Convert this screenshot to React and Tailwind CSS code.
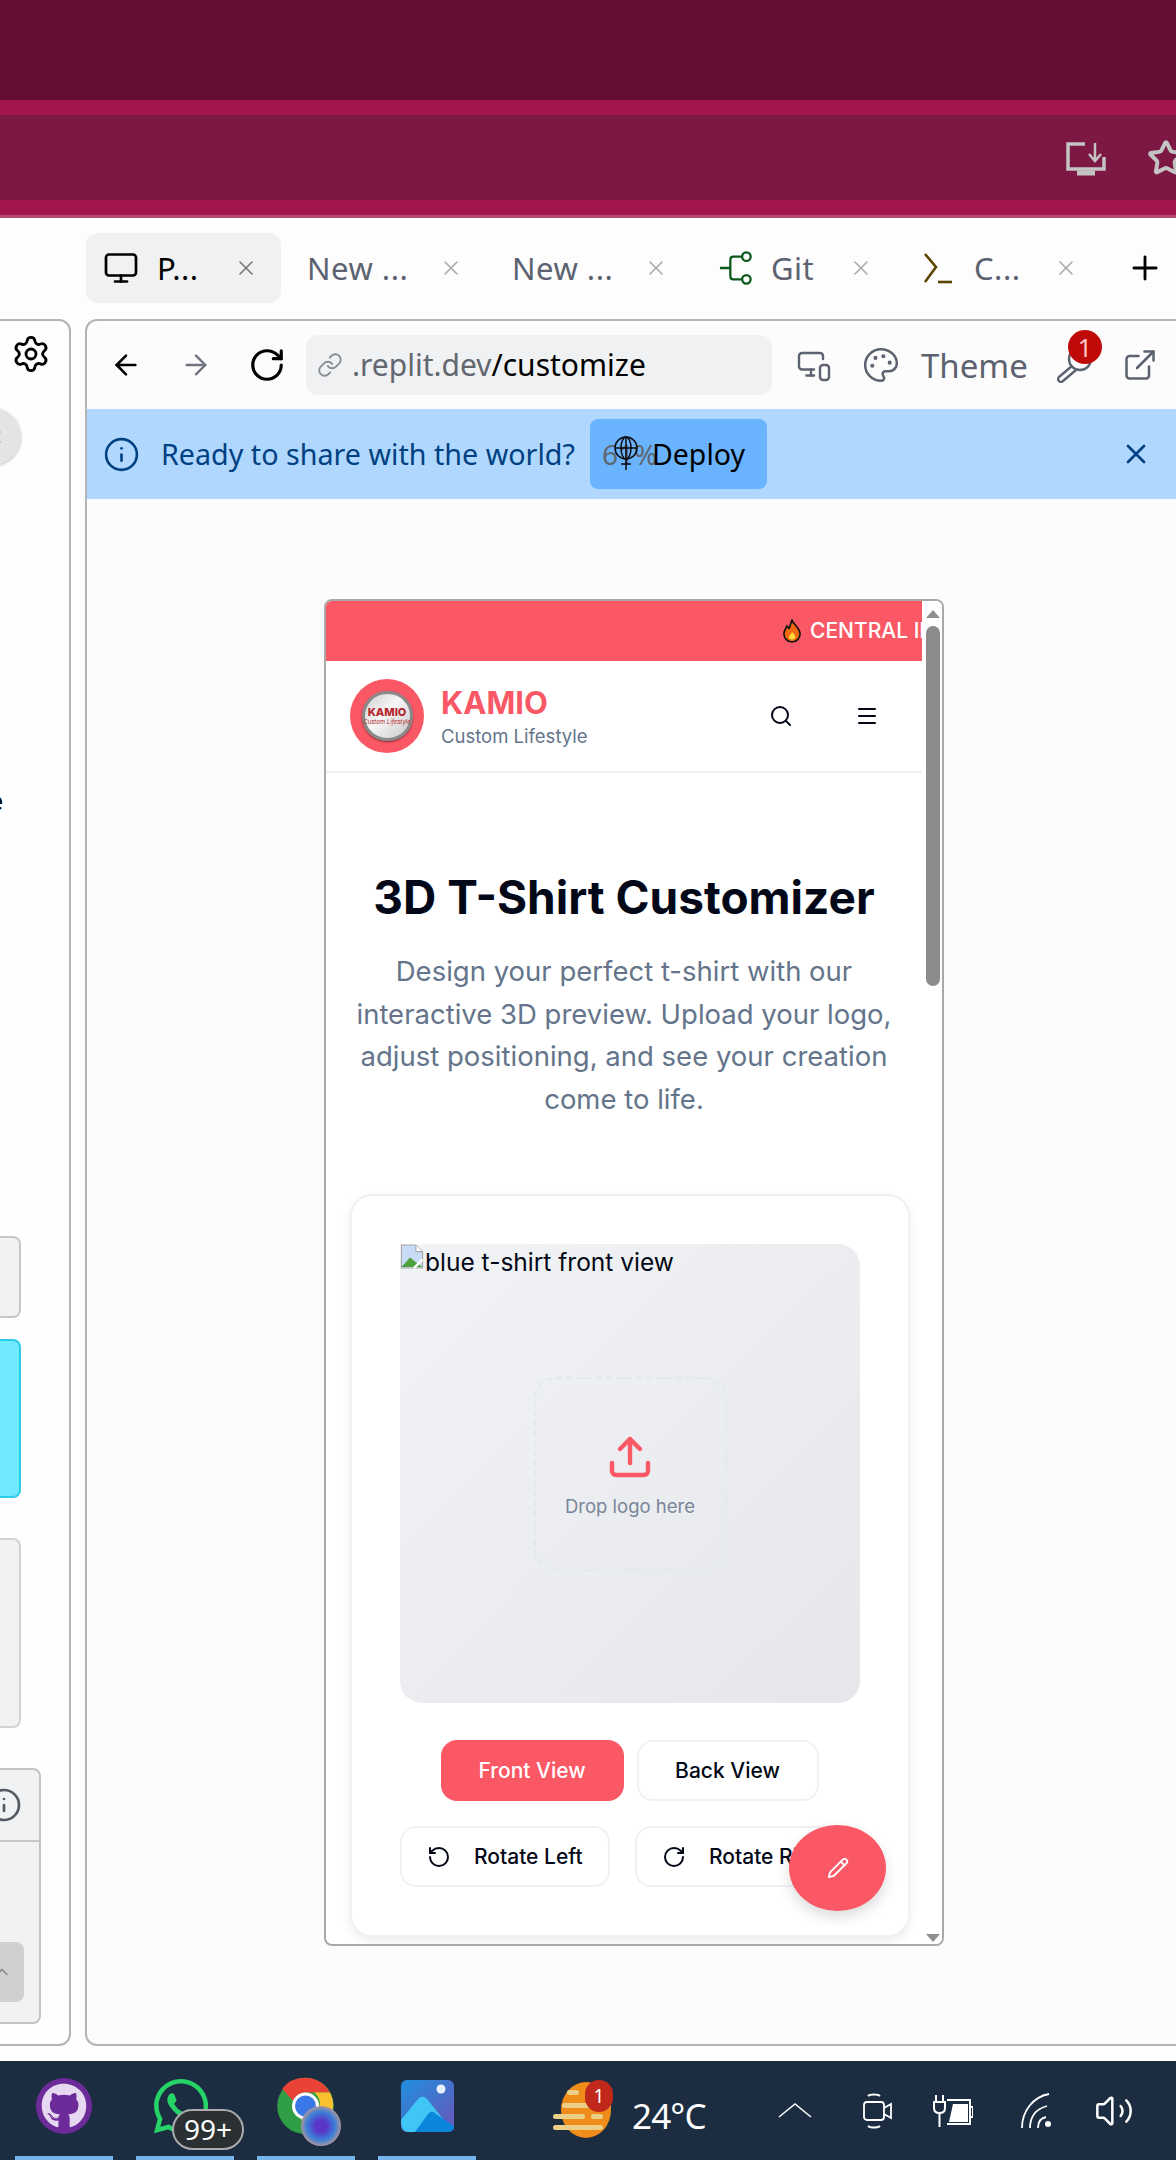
import {
  ArrowLeft, ArrowRight, ExternalLink, Info, Link, Menu, Monitor, MonitorSmartphone,
  Palette, Pencil, Plus, RotateCcw, RotateCw, Search, Settings, Upload, X, ChevronUp,
  Star, Volume2,
} from 'lucide-react';
import { FaGithub, FaWhatsapp } from 'react-icons/fa';

const chrome = "font-['Noto_Sans',sans-serif]";
const inter = "font-['Inter',sans-serif]";

const GitIcon = () => (
  <svg viewBox="0 0 36 36" className="w-[36px] h-[34px]" fill="none" stroke="#0b5a1c" strokeWidth="2.4">
    <path d="M1 18h11M12 18V9a3 3 0 0 1 3-3h9M12 18v9a3 3 0 0 0 3 3h9" />
    <circle cx="29" cy="6" r="4.5" />
    <circle cx="29" cy="30" r="4.5" />
  </svg>
);

const ConsoleIcon = () => (
  <svg viewBox="0 0 30 34" className="w-[30px] h-[34px] mr-[4px]" fill="none" stroke="#5a4500" strokeWidth="2.6">
    <path d="M2 3l11 13-11 15" />
    <path d="M15 31h14" />
  </svg>
);

const KeyIcon = () => (
  <svg viewBox="0 0 36 36" className="w-[36px] h-[36px]" fill="none" stroke="#5c6270" strokeWidth="2.4">
    <circle cx="23" cy="12" r="11" />
    <path d="M15 19L2 30a2.500 2.500 0 0 0 4 4l13-11" />
  </svg>
);

const DeployGlobe = () => (
  <svg viewBox="0 0 26 36" className="absolute left-[23px] top-[16px] w-[26px] h-[36px]" fill="none" stroke="#0b0b0b" strokeWidth="1.500">
    <circle cx="13" cy="13" r="11" />
    <ellipse cx="13" cy="13" rx="5" ry="11" />
    <path d="M2 13h22M13 2v33M8 29h10" />
  </svg>
);

const Tab = ({ icon, label, active }) => (
  <div className={`flex items-center w-[195px] h-[70px] pl-[17px] pr-[23px] rounded-xl ${active ? 'bg-[#f0f1f2]' : ''}`}>
    {icon}
    <span className={`text-[31px] tracking-[0.5px] leading-none ${icon ? 'ml-[17px]' : '-ml-[1px]'} ${active ? 'text-black' : 'text-[#5c6270]'}`}>{label}</span>
    <X className={`ml-auto w-[24px] h-[28px] ${active ? 'text-[#777]' : 'text-[#aaa]'}`} strokeWidth={1.6} />
  </div>
);

const ChromeTabs = () => (
  <div className="h-[101px] pl-[86px] pt-[15px] flex items-start gap-[10px] shrink-0">
    <Tab active label="P..." icon={<Monitor className="w-[38px] h-[36px] -ml-[1px] text-black" strokeWidth={1.8} />} />
    <Tab label="New ..." />
    <Tab label="New ..." />
    <Tab label="Git" icon={<GitIcon />} />
    <Tab label="C..." icon={<ConsoleIcon />} />
    <Plus className="w-[38px] h-[38px] mt-[16px] ml-[15px] text-black" strokeWidth={1.8} />
  </div>
);

const Sidebar = () => (
  <div className="w-[71px] shrink-0 border-r-2 border-y-2 border-[#b4b4b4] rounded-r-xl overflow-hidden flex flex-col items-start bg-[#fefefe]">
    <Settings className="ml-[11px] mt-[13px] w-[40px] h-[40px] text-black" strokeWidth={1.7} />
    <div className="-ml-[36px] mt-[34px] w-[57px] h-[57px] rounded-full bg-[#e4e4e4] flex items-center justify-end pr-[16px] shadow-[0_1px_3px_rgba(0,0,0,0.25)]">
      <X className="w-[20px] h-[20px] text-[#aaa]" />
    </div>
    <span className="-ml-[12px] mt-[322px] text-[26px] leading-[26px] font-semibold text-black">e</span>
    <div className="mt-[423px] w-[21px] h-[82px] bg-[#f1f2f4] border-2 border-l-0 border-[#c6c7c9] rounded-r-lg" />
    <div className="mt-[21px] w-[21px] h-[159px] bg-[#70e8ff] border-2 border-l-0 border-[#2ccbe8] rounded-r-lg" />
    <div className="mt-[40px] w-[21px] h-[190px] bg-[#f1f2f4] border-2 border-l-0 border-[#d2d3d5] rounded-r-lg" />
    <div className="mt-[40px] w-[41px] h-[256px] bg-[#f1f2f4] border-2 border-l-0 border-[#c2c3c5] rounded-r-lg flex flex-col">
      <div className="h-[72px] border-b-2 border-[#c6c7c9] flex items-center">
        <Info className="-ml-[14px] w-[36px] h-[36px] text-[#555a63]" strokeWidth={1.8} />
      </div>
      <div className="mt-[100px] w-[24px] h-[60px] bg-[#d0d0d0] rounded-r-lg flex items-center">
        <ChevronUp className="-ml-[8px] w-[20px] h-[20px] text-[#888]" />
      </div>
    </div>
  </div>
);

const AddressBar = () => (
  <div className="h-[88px] shrink-0 flex items-center pl-[23px]">
    <ArrowLeft className="w-[32px] h-[34px] text-black" strokeWidth={2} />
    <ArrowRight className="ml-[38px] w-[32px] h-[34px] text-[#6f7480]" strokeWidth={1.8} />
    <RotateCw className="ml-[36px] w-[38px] h-[38px] text-black" strokeWidth={2} />
    <div className="ml-[20px] w-[466px] h-[60px] bg-[#f0f1f2] rounded-xl flex items-center pl-[11px]">
      <Link className="w-[26px] h-[26px] text-[#888c94]" strokeWidth={1.7} />
      <span className="ml-[9px] text-[30px] leading-none whitespace-nowrap text-[#62666f]">.replit.dev<span className="text-black">/customize</span></span>
    </div>
    <MonitorSmartphone className="ml-[23px] w-[38px] h-[36px] text-[#5c6270]" strokeWidth={1.6} />
    <Palette className="ml-[29px] w-[38px] h-[38px] text-[#5c6270]" strokeWidth={1.6} />
    <span className="ml-[21px] text-[33px] leading-none text-[#5c6270]">Theme</span>
    <div className="relative ml-[29px]">
      <KeyIcon />
      <span className="absolute -top-[17px] left-[11px] w-[34px] h-[34px] rounded-full bg-[#c00a0a] text-[#ffc9c9] text-[25px] leading-[34px] text-center">1</span>
    </div>
    <ExternalLink className="ml-[29px] w-[36px] h-[36px] text-[#5c6270]" strokeWidth={1.7} />
  </div>
);

const DeployBanner = () => (
  <div className="h-[90px] shrink-0 bg-[#b0d8ff] flex items-center pl-[16px] text-[#004182]">
    <Info className="w-[37px] h-[37px]" strokeWidth={1.7} />
    <span className="ml-[21px] text-[28.7px] leading-none whitespace-nowrap">Ready to share with the world?</span>
    <div className="relative ml-[15px] w-[177px] h-[70px] bg-[#6ab4ff] rounded-lg text-black">
      <span className="absolute left-[12px] top-[20px] text-[28px] leading-[30px] text-[#5d6670]">61%</span>
      <DeployGlobe />
      <span className="absolute left-[62px] top-[20px] text-[28.500px] leading-[30px]">Deploy</span>
    </div>
    <X className="ml-[353px] w-[32px] h-[32px]" strokeWidth={2} />
  </div>
);

const Flame = () => (
  <svg viewBox="0 0 20 24" className="w-[20px] h-[24px] shrink-0">
    <path d="M10 1c1 4 7 7 8 13 .6 5-3.500 9-8 9s-8.500-4-8-9c.3-3 2-4 3-7 1 1 2 2 2 3 1-3 2-6 3-9z" fill="#f26a0f" stroke="#111" strokeWidth="1.6" />
    <path d="M10 13c2 2 4 4 3 6-.5 2-5 2-6 0-.7-2 2-3 3-6z" fill="#ffdc3c" />
  </svg>
);

const LogoMark = () => (
  <div className="w-[74px] h-[74px] shrink-0 rounded-full bg-[#fa5865] flex items-center justify-center">
    <div className="w-[51px] h-[50px] rounded-full border-[3px] border-[#8a8a8a] bg-[linear-gradient(135deg,#d0d0d0,#f6f6f6_45%,#c8c8c8)] shadow-[0_1px_2px_rgba(0,0,0,0.5)] flex flex-col items-center justify-center">
      <span className="text-[11px] leading-[11px] font-extrabold text-[#b3262c]">KAMIO</span>
      <span className="text-[6px] leading-[7px] italic text-[#b3262c] whitespace-nowrap">Custom Lifestyle</span>
    </div>
  </div>
);

const OutlineButton = ({ children, className }) => (
  <div className={`h-[61px] bg-white border-2 border-[#eef1f6] rounded-2xl flex items-center text-[21px] font-medium text-[#020817] whitespace-nowrap overflow-hidden ${className}`}>
    {children}
  </div>
);

const BrokenImage = () => (
  <svg viewBox="0 0 24 26" className="w-[24px] h-[25px] shrink-0">
    <path d="M1 1h15l7 7v17H1z" fill="#c9dcf7" stroke="#a8a8a8" strokeWidth="1.2" />
    <path d="M16 1v7h7" fill="#fff" stroke="#a8a8a8" strokeWidth="1.2" />
    <path d="M1 24l9-10 6 5 7 5z" fill="#4ea23a" />
    <path d="M14 25l9-9" stroke="#fff" strokeWidth="2.500" />
  </svg>
);

const PreviewFrame = () => (
  <div className={`relative w-[620px] h-[1347px] border-2 border-[#a8a8a8] rounded-lg overflow-hidden flex bg-white ${inter}`}>
    <div className="w-[596px] shrink-0 flex flex-col">
      <div className="h-[60px] shrink-0 bg-[#fa5865] flex items-center pl-[456px] overflow-hidden text-white text-[21px] font-medium whitespace-nowrap">
        <Flame />
        <span className="ml-[8px]">CENTRAL INDIA'S FAVOURITE</span>
      </div>
      <header className="h-[112px] shrink-0 border-b-2 border-[#eef1f6] flex items-center pl-[24px]">
        <LogoMark />
        <div className="ml-[17px] mt-[4px]">
          <div className="text-[31px] leading-[36px] font-bold text-[#fa5865]">KAMIO</div>
          <div className="text-[18.500px] leading-[30px] text-[#64748b]">Custom Lifestyle</div>
        </div>
        <Search className="ml-[181px] w-[24px] h-[24px] text-[#020817]" strokeWidth={2} />
        <Menu className="ml-[62px] w-[24px] h-[24px] text-[#020817]" strokeWidth={2} />
      </header>
      <h1 className="mt-[96px] text-center text-[46px] leading-[56px] font-bold text-[#020817] whitespace-nowrap">3D T-Shirt Customizer</h1>
      <p className="mt-[25px] text-center text-[27.500px] leading-[42.600px] text-[#64748b] whitespace-nowrap">
        Design your perfect t-shirt with our<br />
        interactive 3D preview. Upload your logo,<br />
        adjust positioning, and see your creation<br />
        come to life.
      </p>
      <div className="ml-[24px] mt-[74px] w-[560px] h-[743px] shrink-0 border-2 border-[#eef1f6] rounded-[22px] bg-white shadow-[0_4px_10px_rgba(0,0,0,0.08)] pt-[48px] pl-[48px]">
        <div className="relative w-[460px] h-[459px] rounded-[22px] bg-gradient-to-br from-[#f2f3f5] to-[#e5e7eb] flex items-center justify-center">
          <div className="absolute left-0 top-0 flex items-start text-[24.500px] leading-[36px] text-[#020817] whitespace-nowrap">
            <BrokenImage />
            <span className="ml-[1px]">blue t-shirt front view</span>
          </div>
          <div className="w-[193px] h-[194px] rounded-[22px] border-2 border-dashed border-[#e2e8f0] flex flex-col items-center pt-[54px]">
            <Upload className="w-[48px] h-[48px] text-[#fa5865]" strokeWidth={2.200} />
            <span className="mt-[11px] text-[18.500px] leading-[28px] text-[#7a8599]">Drop logo here</span>
          </div>
        </div>
        <div className="mt-[37px] w-[459px] flex justify-center gap-[13px]">
          <div className="w-[183px] h-[61px] rounded-2xl bg-[#fa5865] text-white text-[21px] font-medium flex items-center justify-center">Front View</div>
          <OutlineButton className="w-[182px] justify-center">Back View</OutlineButton>
        </div>
        <div className="mt-[25px] flex gap-[25px]">
          <OutlineButton className="w-[210px] pl-[25px]">
            <RotateCcw className="w-[24px] h-[24px]" strokeWidth={2} />
            <span className="ml-[23px]">Rotate Left</span>
          </OutlineButton>
          <OutlineButton className="w-[223px] pl-[25px]">
            <RotateCw className="w-[24px] h-[24px]" strokeWidth={2} />
            <span className="ml-[23px]">Rotate Right</span>
          </OutlineButton>
        </div>
      </div>
    </div>
    <div className="w-[21px] shrink-0 bg-white flex flex-col items-center pt-[9px]">
      <div className="w-0 h-0 border-x-[7px] border-x-transparent border-b-[8px] border-b-[#8f8f8f]" />
      <div className="mt-[8px] w-[14px] h-[360px] rounded-full bg-[#8b8b8b]" />
      <div className="mt-auto mb-[2px] w-0 h-0 border-x-[7px] border-x-transparent border-t-[8px] border-t-[#8f8f8f]" />
    </div>
    <div className="absolute right-[56px] bottom-[33px] w-[97px] h-[86px] rounded-[50%] bg-[#fa5865] shadow-[0_6px_14px_rgba(0,0,0,0.14)] flex items-center justify-center">
      <Pencil className="w-[22px] h-[22px] text-white" strokeWidth={2} />
    </div>
  </div>
);

const MainPanel = () => (
  <div className="ml-[14px] w-[1102px] shrink-0 border-2 border-r-0 border-[#b4b4b4] rounded-l-xl overflow-hidden flex flex-col bg-[#fcfcfc]">
    <AddressBar />
    <DeployBanner />
    <div className="pt-[100px] pl-[237px]">
      <PreviewFrame />
    </div>
  </div>
);

const ChromeLogo = () => (
  <svg viewBox="0 0 48 48" className="w-[59px] h-[60px]">
    <circle cx="24" cy="24" r="23" fill="#2f9e44" />
    <path d="M24 1a23 23 0 0 1 20 12H24a11 11 0 0 0-10 7L5 10A23 23 0 0 1 24 1z" fill="#ea4335" />
    <path d="M44 13a23 23 0 0 1-16 33l-10-15a11 11 0 0 0 13-18z" fill="#fbc02d" />
    <circle cx="24" cy="24" r="11" fill="#fff" />
    <circle cx="24" cy="24" r="8.500" fill="#3b78e7" />
  </svg>
);

const PhotosLogo = () => (
  <svg viewBox="0 0 53 52" className="w-[53px] h-[52px]">
    <defs>
      <linearGradient id="photosBg" x1="0" y1="0" x2="1" y2="1">
        <stop offset="0" stopColor="#1f8fe0" />
        <stop offset="1" stopColor="#6a55b8" />
      </linearGradient>
    </defs>
    <rect width="53" height="52" rx="6" fill="url(#photosBg)" />
    <ellipse cx="40" cy="9" rx="4.500" ry="4.500" fill="#e8f2ff" />
    <path d="M0 40l17-21c3-3 6-3 9 0l20 25c2 3 4 8-2 8H8c-6 0-8-4-8-12z" fill="#3fc6f5" />
    <path d="M14 52l13-18c3-3 5-3 8 0l18 12v1a5 5 0 0 1-5 5z" fill="#0c86dc" />
  </svg>
);

const WeatherLogo = () => (
  <svg viewBox="0 0 58 57" className="w-[58px] h-[57px]">
    <ellipse cx="33" cy="29" rx="25" ry="28" fill="#f08c1a" />
    <g fill="#eccf86">
      <rect x="14" y="9" width="12" height="5" rx="2.500" />
      <rect x="9" y="22" width="49" height="5" rx="2.500" />
      <rect x="0" y="33" width="32" height="5" rx="2.500" />
      <rect x="38" y="33" width="12" height="5" rx="2.500" />
      <rect x="0" y="44" width="50" height="5" rx="2.500" />
    </g>
  </svg>
);

const CameraTray = () => (
  <svg viewBox="0 0 30 36" className="w-[30px] h-[36px]" fill="none" stroke="#fff" strokeWidth="1.800">
    <path d="M6 3c2-2 10-2 12 0M6 33c2 2 10 2 12 0" />
    <rect x="2" y="9" width="20" height="18" rx="3" />
    <path d="M22 15l7-4v14l-7-4" />
  </svg>
);

const BatteryTray = () => (
  <svg viewBox="0 0 40 36" className="w-[40px] h-[36px]" fill="none" stroke="#fff" strokeWidth="2">
    <path d="M3 2v7M10 2v7M1 9h11v6c0 3-2 5-5.500 5S1 18 1 15zM6.500 20v14" />
    <path d="M14 7h23v24H14" />
    <path d="M16 29l4-18h15v18z" fill="#fff" stroke="none" />
    <path d="M37 14h3v10h-3" />
  </svg>
);

const WifiTray = () => (
  <svg viewBox="0 0 32 36" className="w-[32px] h-[36px]" fill="none" stroke="#fff" strokeWidth="1.800">
    <path d="M1 35C1 18 12 4 28 1M9 35c0-11 6-19 17-22M17 35c0-6 3-10 8-11" />
    <circle cx="27" cy="31" r="3" fill="#fff" stroke="none" />
  </svg>
);

const TaskApp = ({ children }) => (
  <div className="relative w-[98px] h-[100px] flex items-center justify-center">
    {children}
    <div className="absolute bottom-0 inset-x-0 h-[5px] bg-[#74b6ec]" />
  </div>
);

const Taskbar = () => (
  <div className={`h-[100px] shrink-0 bg-[#1c2d42] flex pl-[15px] text-white ${chrome}`}>
    <div className="flex gap-[23px]">
      <TaskApp>
        <div className="-mt-[10px] w-[56px] h-[56px] rounded-full bg-[#6d2a99] flex items-center justify-center">
          <FaGithub className="w-[46px] h-[46px] text-[#e6d8f0]" />
        </div>
      </TaskApp>
      <TaskApp>
        <FaWhatsapp className="-mt-[10px] -ml-[8px] w-[62px] h-[62px] text-[#25d366]" />
        <span className="absolute left-[36px] top-[48px] w-[72px] h-[41px] rounded-full bg-[#2b3033] border-2 border-[#a9abae] text-[28px] leading-[36px] text-center">99+</span>
      </TaskApp>
      <TaskApp>
        <div className="-mt-[10px] -ml-[2px]"><ChromeLogo /></div>
        <div className="absolute left-[44px] top-[45px] w-[40px] h-[40px] rounded-full bg-[radial-gradient(circle,#5a36c8_20%,#3a7fd8_50%,#d99f86_80%)]" />
      </TaskApp>
      <TaskApp>
        <div className="-mt-[10px]"><PhotosLogo /></div>
      </TaskApp>
    </div>
    <div className="relative ml-[77px] mt-[20px] h-[57px]">
      <WeatherLogo />
      <span className="absolute left-[32px] -top-[1px] w-[28px] h-[32px] rounded-full bg-[#c1281c] text-[19px] leading-[32px] text-center">1</span>
    </div>
    <span className="ml-[21px] mt-[33px] text-[35px] leading-[44px] tracking-tight">24°C</span>
    <svg viewBox="0 0 34 15" className="ml-[72px] mt-[42px] w-[34px] h-[15px]" fill="none" stroke="#fff" strokeWidth="1.500">
      <path d="M1 14L17 1l16 13" />
    </svg>
    <div className="ml-[50px] mt-[32px]"><CameraTray /></div>
    <div className="ml-[41px] mt-[32px]"><BatteryTray /></div>
    <div className="ml-[48px] mt-[32px]"><WifiTray /></div>
    <Volume2 className="ml-[41px] mt-[29px] w-[40px] h-[42px] text-white" strokeWidth={1.500} />
  </div>
);

export default function App() {
  return (
    <div className={`w-[1176px] h-[2160px] overflow-hidden flex flex-col bg-[#fdfdfd] ${chrome}`}>
      <div className="h-[100px] shrink-0 bg-[#650e33]" />
      <div className="h-[115px] shrink-0 bg-[#7d1845] border-y-[15px] border-[#a3154f] flex items-center justify-end overflow-hidden">
        <svg viewBox="0 0 42 36" className="w-[42px] h-[36px] shrink-0 mt-[2px]" fill="none" stroke="#c4c4c4" strokeWidth="3.500">
          <path d="M20 3H3v25h36V16" />
          <path d="M30 2v17M24 13l6 7 6-7" strokeWidth="2.500" />
          <path d="M12 32h18" strokeWidth="5" />
        </svg>
        <Star className="ml-[40px] -mr-[9px] w-[38px] h-[38px] shrink-0 text-[#c4c4c4]" strokeWidth={2.500} />
      </div>
      <div className="h-[3px] shrink-0 bg-[#b04a72]" />
      <ChromeTabs />
      <div className="h-[1727px] shrink-0 flex">
        <Sidebar />
        <MainPanel />
      </div>
      <div className="h-[15px] shrink-0" />
      <Taskbar />
    </div>
  );
}
